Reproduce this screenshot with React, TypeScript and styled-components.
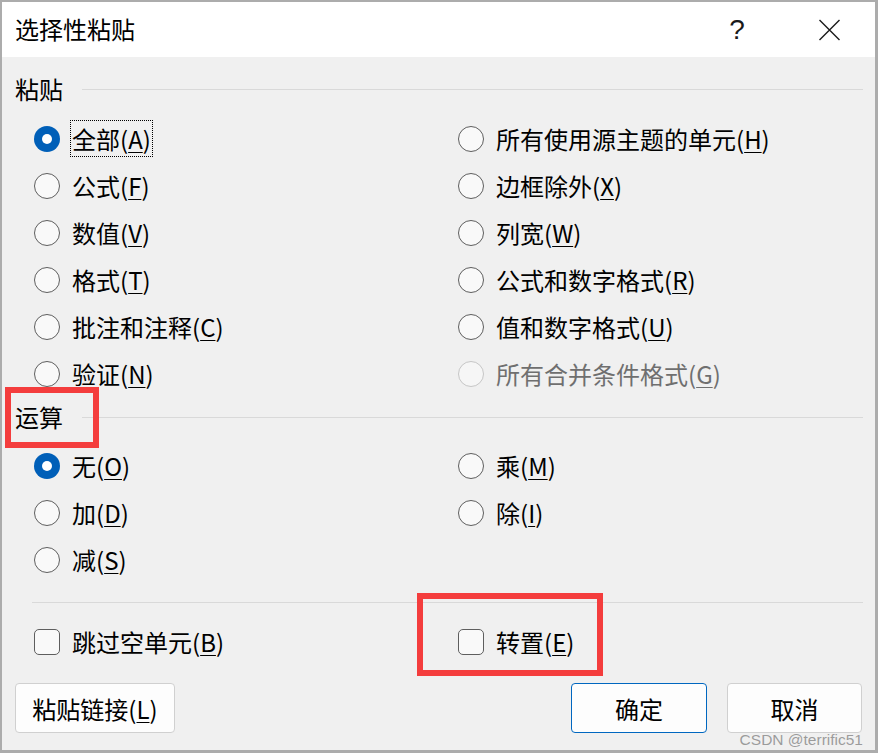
import styled, { createGlobalStyle } from 'styled-components';

const GlobalStyle = createGlobalStyle`
  html, body {
    margin: 0;
    padding: 0;
    background: #ffffff;
  }
  body {
    font-family: "Noto Sans CJK SC", "Noto Sans", sans-serif;
  }
`;

const Page = styled.div`
  position: relative;
  width: 878px;
  height: 753px;
  overflow: hidden;
`;

const Window = styled.div`
  box-sizing: border-box;
  width: 100%;
  height: 100%;
  display: flex;
  flex-direction: column;
  background: #f0f0f0;
  border: 2px solid #acacac;
  border-right-width: 3px;
  border-bottom-width: 3px;
  color: #000;
`;

const TitleBar = styled.div`
  height: 55px;
  flex: none;
  display: flex;
  align-items: center;
  background: #ffffff;
  padding-left: 13px;
`;

const Title = styled.div`
  flex: 1;
  font-size: 24px;
  line-height: 1;
  margin-top: -2px;
`;

const TitleButton = styled.div`
  width: 92px;
  height: 55px;
  display: flex;
  align-items: center;
  justify-content: center;
  font-family: "Liberation Sans", Arial, sans-serif;
  font-size: 28px;
  color: #1a1a1a;
`;

const Body = styled.div`
  flex: 1;
  display: flex;
  flex-direction: column;
  padding: 16px 12px 16px 13px;
`;

const SectionHeader = styled.div<{ $top: number; $gap: number }>`
  height: 38px;
  display: flex;
  align-items: center;
  margin-top: ${(p) => p.$top}px;
  margin-bottom: ${(p) => p.$gap}px;
`;

const SectionLabel = styled.span`
  font-size: 24px;
  line-height: 1;
  margin-top: -6px;
`;

const Rule = styled.div`
  flex: 1;
  height: 1px;
  background: #d9d9d9;
  margin-left: 19px;
  margin-top: -5px;
`;

const Separator = styled.div`
  height: 1px;
  background: #d9d9d9;
  margin: 19px 0 15px 17px;
`;

const OptionGrid = styled.div`
  display: grid;
  grid-template-columns: 424px 1fr;
  grid-auto-rows: 47px;
  padding-left: 19px;
`;

const Option = styled.div`
  display: flex;
  align-items: center;
  gap: 10px;
`;

const Radio = styled.span<{ $checked?: boolean; $disabled?: boolean }>`
  position: relative;
  box-sizing: border-box;
  width: 26px;
  height: 26px;
  flex: none;
  border-radius: 50%;
  background: ${(p) => (p.$checked ? '#005fb8' : p.$disabled ? '#f6f6f6' : '#f9f9f9')};
  border: ${(p) =>
    p.$checked ? 'none' : p.$disabled ? '1.5px solid #c6c6c6' : '1.5px solid #5e5e5e'};

  &::after {
    content: '';
    display: ${(p) => (p.$checked ? 'block' : 'none')};
    position: absolute;
    left: 8px;
    top: 8px;
    width: 10px;
    height: 10px;
    border-radius: 50%;
    background: #ffffff;
  }
`;

const CheckBox = styled.span`
  box-sizing: border-box;
  width: 26px;
  height: 26px;
  flex: none;
  border-radius: 5px;
  border: 1.5px solid #5e5e5e;
  background: #f9f9f9;
`;

const Label = styled.span<{ $focus?: boolean; $disabled?: boolean }>`
  font-size: 24px;
  line-height: 31px;
  padding: 2px 1px;
  border: 1px dotted ${(p) => (p.$focus ? '#000' : 'transparent')};
  color: ${(p) => (p.$disabled ? '#6f6f6f' : '#000')};
  white-space: nowrap;

  u {
    text-decoration-thickness: 1px;
    text-underline-offset: 3px;
  }
`;

const ButtonRow = styled.div`
  display: flex;
  justify-content: space-between;
  margin-top: 18px;
`;

const ButtonGroup = styled.div`
  display: flex;
  gap: 20px;
  margin-right: 1px;
`;

const Button = styled.div<{ $width: number; $primary?: boolean }>`
  box-sizing: border-box;
  width: ${(p) => p.$width}px;
  height: 50px;
  display: flex;
  align-items: center;
  justify-content: center;
  font-size: 24px;
  background: #fdfdfd;
  border: 1px solid ${(p) => (p.$primary ? '#0067c0' : '#d0d0d0')};
  border-radius: 4px;

  u {
    text-decoration-thickness: 1px;
    text-underline-offset: 3px;
  }
`;

const Highlight = styled.div`
  position: absolute;
  box-sizing: border-box;
  border: 6px solid #f43d3d;
  pointer-events: none;
`;

const Watermark = styled.div`
  position: absolute;
  right: 15px;
  bottom: 4px;
  font-family: "Liberation Sans", Arial, sans-serif;
  font-size: 15.5px;
  color: rgba(140, 140, 140, 0.85);
`;

type Item = {
  text: string;
  key: string;
  checked?: boolean;
  disabled?: boolean;
  focus?: boolean;
} | null;

const pasteItems: Item[] = [
  { text: '全部', key: 'A', checked: true, focus: true },
  { text: '所有使用源主题的单元', key: 'H' },
  { text: '公式', key: 'F' },
  { text: '边框除外', key: 'X' },
  { text: '数值', key: 'V' },
  { text: '列宽', key: 'W' },
  { text: '格式', key: 'T' },
  { text: '公式和数字格式', key: 'R' },
  { text: '批注和注释', key: 'C' },
  { text: '值和数字格式', key: 'U' },
  { text: '验证', key: 'N' },
  { text: '所有合并条件格式', key: 'G', disabled: true },
];

const opItems: Item[] = [
  { text: '无', key: 'O', checked: true },
  { text: '乘', key: 'M' },
  { text: '加', key: 'D' },
  { text: '除', key: 'I' },
  { text: '减', key: 'S' },
  null,
];

const Accel = ({ text, k }: { text: string; k: string }) => (
  <>
    {text}(<u>{k}</u>)
  </>
);

const RadioGrid = ({ items }: { items: Item[] }) => (
  <OptionGrid>
    {items.map((it, i) =>
      it ? (
        <Option key={i}>
          <Radio $checked={it.checked} $disabled={it.disabled} />
          <Label $focus={it.focus} $disabled={it.disabled}>
            <Accel text={it.text} k={it.key} />
          </Label>
        </Option>
      ) : (
        <div key={i} />
      )
    )}
  </OptionGrid>
);

const CloseIcon = () => (
  <svg width="23" height="22" viewBox="0 0 23 22" fill="none">
    <path d="M1.5 1 L21.5 21 M21.5 1 L1.5 21" stroke="#1a1a1a" strokeWidth="1.4" />
  </svg>
);

export default function App() {
  return (
    <>
      <GlobalStyle />
      <Page>
        <Window>
          <TitleBar>
            <Title>选择性粘贴</Title>
            <TitleButton>?</TitleButton>
            <TitleButton>
              <CloseIcon />
            </TitleButton>
          </TitleBar>
          <Body>
            <SectionHeader $top={0} $gap={4}>
              <SectionLabel>粘贴</SectionLabel>
              <Rule />
            </SectionHeader>
            <RadioGrid items={pasteItems} />
            <SectionHeader $top={4} $gap={3}>
              <SectionLabel>运算</SectionLabel>
              <Rule />
            </SectionHeader>
            <RadioGrid items={opItems} />
            <Separator />
            <OptionGrid>
              <Option>
                <CheckBox />
                <Label>
                  <Accel text="跳过空单元" k="B" />
                </Label>
              </Option>
              <Option>
                <CheckBox />
                <Label>
                  <Accel text="转置" k="E" />
                </Label>
              </Option>
            </OptionGrid>
            <ButtonRow>
              <Button $width={160}>
                <Accel text="粘贴链接" k="L" />
              </Button>
              <ButtonGroup>
                <Button $width={136} $primary>
                  确定
                </Button>
                <Button $width={135}>取消</Button>
              </ButtonGroup>
            </ButtonRow>
          </Body>
        </Window>
        <Highlight style={{ left: 5, top: 387, width: 94, height: 61 }} />
        <Highlight style={{ left: 417, top: 593, width: 186, height: 83 }} />
        <Watermark>CSDN @terrific51</Watermark>
      </Page>
    </>
  );
}
